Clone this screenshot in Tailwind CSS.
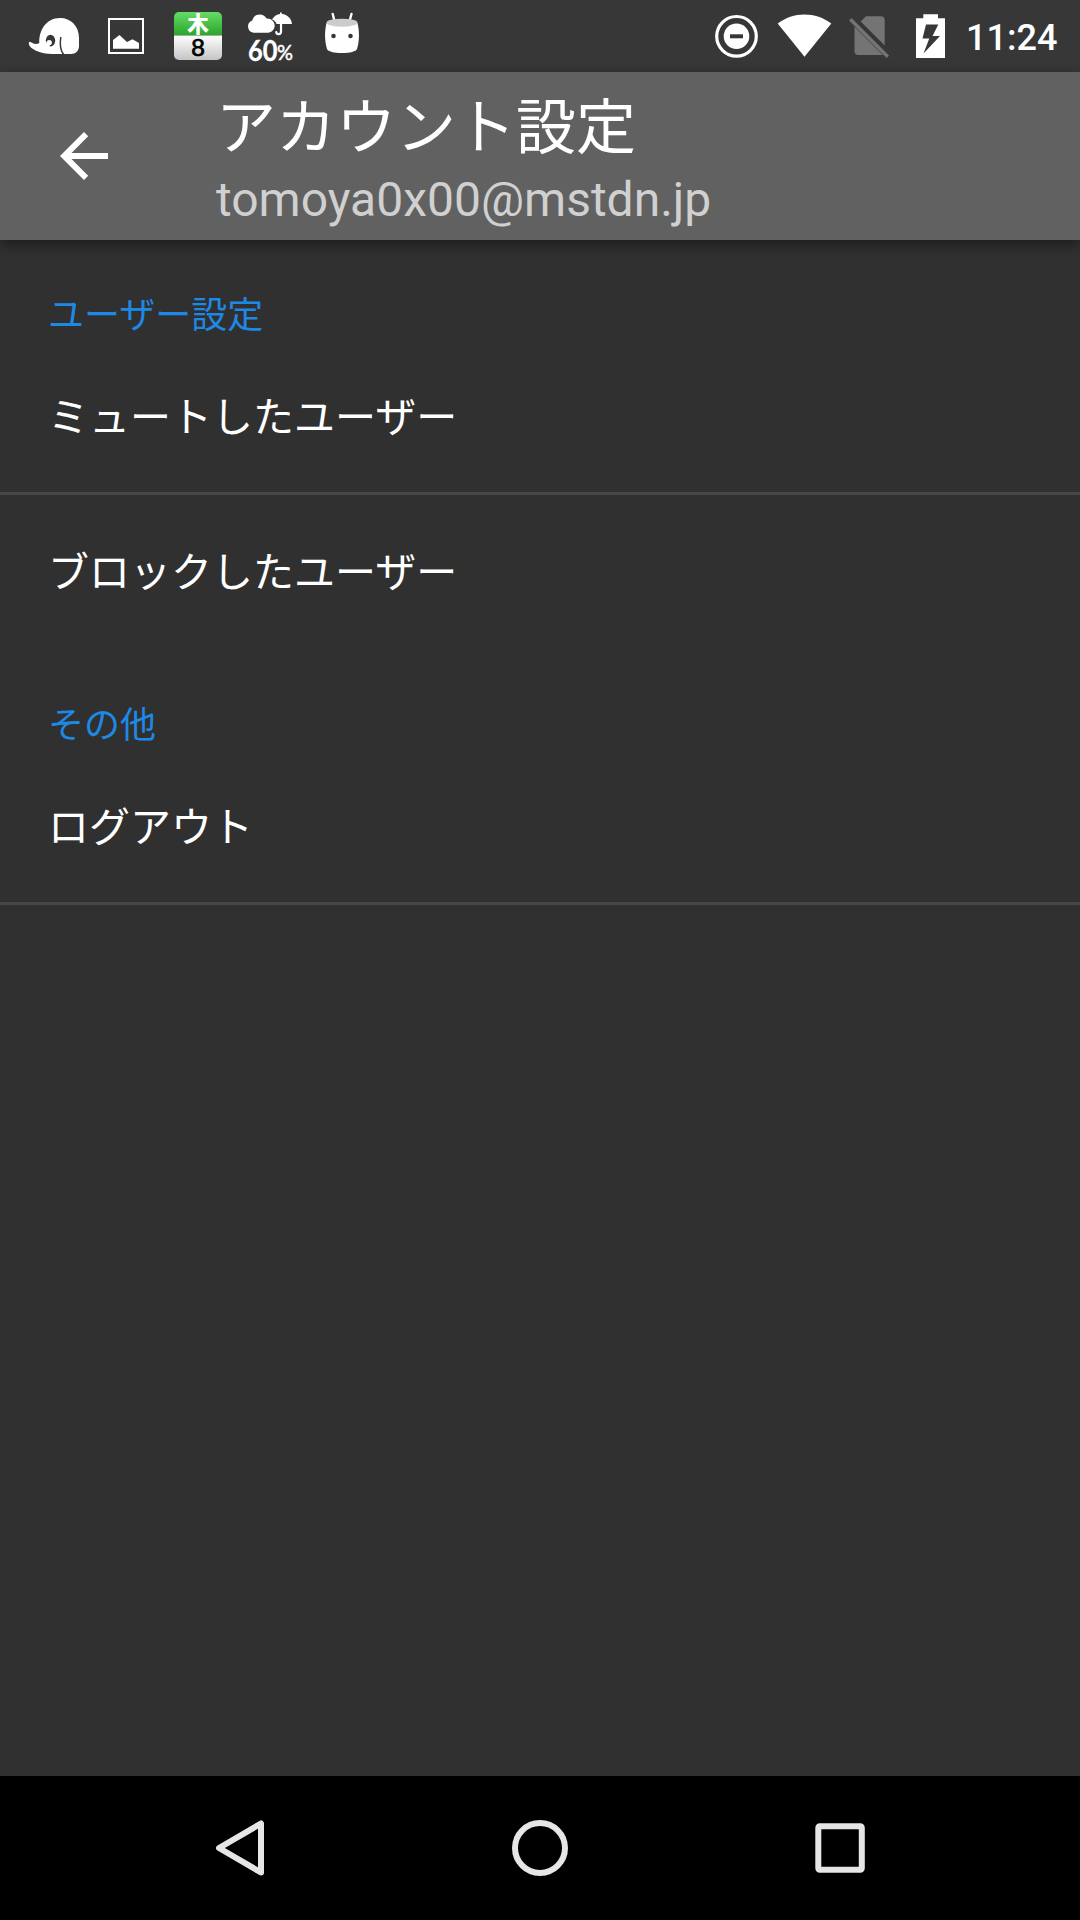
<!DOCTYPE html>
<html lang="ja">
<head>
<meta charset="utf-8">
<title>アカウント設定</title>
<script src="https://cdn.jsdelivr.net/npm/@tailwindcss/browser@4"></script>
</head>
<body class="w-[1080px] h-[1920px] overflow-hidden bg-[#303030] text-white font-[Roboto,'Noto_Sans_CJK_JP',sans-serif] flex flex-col">

<!-- status bar -->
<div class="h-[72px] shrink-0 bg-[#373737] flex justify-between pl-7 pr-6">
  <div class="flex">
    <svg class="w-[52px] h-[72px] mr-7" viewBox="28 0 52 72">
      <path fill="#fff" d="M39.300 43C39 29 47 18 60 18C71 18 79 26 79 38V46C79 51 75.500 54 71 54H52C43 54 33 50.500 30 46.500C28.500 44.500 28.500 42.500 29.500 41.800C32 42 35 46 39.300 43Z"/>
      <path fill="none" stroke="#373737" stroke-width="1.500" d="M60.800 37C59.800 43 59.500 49 63.500 54.500"/>
      <ellipse cx="50.500" cy="40.600" rx="4.700" ry="5.900" fill="#373737"/>
      <circle cx="49.200" cy="42.600" r="2.700" fill="#fff"/>
      <path fill="#fff" d="M45 43L49 42L50 47.500H45Z"/>
    </svg>
    <svg class="w-9 h-[72px] mr-[30px]" viewBox="108 0 36 72">
      <rect x="109" y="19" width="34" height="34" fill="none" stroke="#fff" stroke-width="2"/>
      <path fill="#fff" d="M113 40L119.500 35L127 42L132.500 39.300L139 43V48.700H113Z"/>
    </svg>
    <svg class="w-12 h-[72px] mr-[25px]" viewBox="174 0 48 72">
      <defs>
        <linearGradient id="green" x1="0" y1="0" x2="0" y2="1"><stop offset="0" stop-color="#66dc66"/><stop offset="1" stop-color="#2ba42b"/></linearGradient>
        <linearGradient id="paper" x1="0" y1="0" x2="0" y2="1"><stop offset="0" stop-color="#fff"/><stop offset="1" stop-color="#c4c4c4"/></linearGradient>
      </defs>
      <path fill="url(#green)" d="M174 35.500V17A5 5 0 0 1 179 12H217A5 5 0 0 1 222 17V35.500Z"/>
      <path fill="url(#paper)" d="M174 35.500V55A5 5 0 0 0 179 60H217A5 5 0 0 0 222 55V35.500Z"/>
      <text x="198" y="32" text-anchor="middle" fill="#fff" font-family="Noto Sans CJK JP" font-weight="900" font-size="21.500">木</text>
      <text x="198" y="56.300" text-anchor="middle" fill="#000" font-family="Liberation Sans" stroke="#000" stroke-width=".7" font-size="24.500">8</text>
    </svg>
    <svg class="w-[46px] h-[72px] mr-8" viewBox="247 0 46 72">
      <path fill="#fff" d="M253.500 32.700A6.300 6.300 0 0 1 252.300 20.500C253.500 13.500 263.500 12.500 266.500 18.500C271 18 274.700 21.500 274.700 25.600C274.700 29.700 271.500 32.700 268 32.700Z"/>
      <path fill="#fff" d="M272 19.500C274 15.800 277 14.400 280 14V12.500H281.800V14C287.500 14.500 291.500 18.500 292 24H276.500C276 22 274.500 20.500 272 19.500Z"/>
      <path fill="none" stroke="#fff" stroke-width="2.200" stroke-linecap="round" d="M281 22V31.500C281 35 276.500 35 276.300 32"/>
      <text x="248" y="60.500" textLength="29.500" lengthAdjust="spacingAndGlyphs" fill="#fff" stroke="#fff" stroke-width=".3" font-family="Lato" font-weight="700" font-size="28">60</text>
      <text x="277" y="60" textLength="16" lengthAdjust="spacingAndGlyphs" fill="#fff" font-family="Lato" font-weight="400" stroke="#fff" stroke-width=".5" font-size="21">%</text>
    </svg>
    <svg class="w-[34px] h-[72px]" viewBox="325 0 34 72">
      <path stroke="#fff" stroke-width="2.400" stroke-linecap="round" d="M332.700 14L334.700 22M351.500 14L349.300 22"/>
      <path fill="#fff" d="M326.500 23C324.500 31 324.500 41 327 49C328 51.500 334 53 342 53S356 51.500 357 49C359.500 41 359.500 31 357.500 23Z"/>
      <ellipse cx="342" cy="22.700" rx="15.500" ry="4" fill="#ccc"/>
      <circle cx="333.500" cy="36" r="2.300" fill="#373737"/><circle cx="350.500" cy="36" r="2.300" fill="#373737"/>
    </svg>
  </div>
  <div class="flex">
    <svg class="w-11 h-[72px] mr-[18px]" viewBox="714 0 44 72">
      <circle cx="736.500" cy="36.300" r="19.800" fill="none" stroke="#fff" stroke-width="3.200"/>
      <circle cx="736.500" cy="36.300" r="12.800" fill="#fff"/>
      <rect x="730" y="34.300" width="13" height="4" fill="#373737"/>
    </svg>
    <svg class="w-[56px] h-[72px] mr-[17px]" viewBox="776 0 56 72">
      <path fill="#fff" d="M777.700 23.600C793 11.300 816 11.300 831.300 23.600L804.500 56.800Z"/>
    </svg>
    <svg class="w-10 h-[72px] mr-[27px]" viewBox="849 0 40 72">
      <path fill="#747474" d="M860.700 21.500L866 16.200H881Q884.700 16.200 884.700 20V45.500ZM854.500 26.500L882.700 54.700Q882 55 881 55H858.500Q854.500 55 854.500 51Z"/>
      <path stroke="#747474" stroke-width="3.400" d="M850.300 19.200L887.800 56.700"/>
    </svg>
    <svg class="w-[29px] h-[72px] mr-[21px]" viewBox="916 0 29 72">
      <path fill="#fff" fill-rule="evenodd" d="M923.300 14.300H938V18.300H945V58H916V18.300H923.300ZM926 24.500L922.500 38.500H929.300L923.500 53.500L940 36H932.500L938.300 24.500Z"/>
    </svg>
    <div class="text-[36px] leading-[76px] font-medium w-[90px] whitespace-nowrap">11:24</div>
  </div>
</div>

<!-- app bar -->
<header class="relative h-[168px] shrink-0 bg-[#616161] flex items-center shadow-[0_4px_12px_rgba(0,0,0,0.45)]">
  <svg class="w-12 h-12 ml-[60px] mr-[108px]" viewBox="0 0 48 48">
    <path fill="#fff" d="M48 21H11.500L28.200 4.200L24 0L0 24L24 48L28.200 43.800L11.500 27H48Z"/>
  </svg>
  <div class="flex flex-col h-full pt-[17px]">
    <h1 class="text-[60px] leading-[80px] font-normal whitespace-nowrap">アカウント設定</h1>
    <p class="text-[48px] leading-[62px] text-[#d0d0d0] whitespace-nowrap">tomoya0x00@mstdn.jp</p>
  </div>
</header>

<!-- preferences -->
<main class="flex-1">
  <section>
    <h2 class="h-[100px] pt-[52px] px-12 text-[36px] leading-[48px] text-[#1e88e5]">ユーザー設定</h2>
    <div class="h-[155px] px-12 pt-1.5 border-b-3 border-[#474747] flex items-center text-[41px]">ミュートしたユーザー</div>
    <div class="h-[155px] px-12 pt-1.5 border-b-3 border-transparent flex items-center text-[41px]">ブロックしたユーザー</div>
  </section>
  <section>
    <h2 class="h-[100px] pt-[52px] px-12 text-[36px] leading-[48px] text-[#1e88e5]">その他</h2>
    <div class="h-[155px] px-12 pt-1.5 border-b-3 border-[#474747] flex items-center text-[41px]">ログアウト</div>
  </section>
</main>

<!-- navigation bar -->
<nav class="h-[144px] shrink-0 bg-black flex items-center justify-center gap-[244px]">
  <svg class="w-14 h-14" viewBox="0 0 56 56" fill="none" stroke="#e6e6e6" stroke-width="6" stroke-linejoin="round"><path d="M49 3.500V52.500L7 28Z"/></svg>
  <svg class="w-14 h-14" viewBox="0 0 56 56" fill="none" stroke="#e6e6e6" stroke-width="6"><circle cx="28" cy="28" r="25"/></svg>
  <svg class="w-14 h-14" viewBox="0 0 56 56" fill="none" stroke="#e6e6e6" stroke-width="6"><rect x="6.300" y="6.300" width="43.500" height="43.500" rx="1.500"/></svg>
</nav>
</body>
</html>
